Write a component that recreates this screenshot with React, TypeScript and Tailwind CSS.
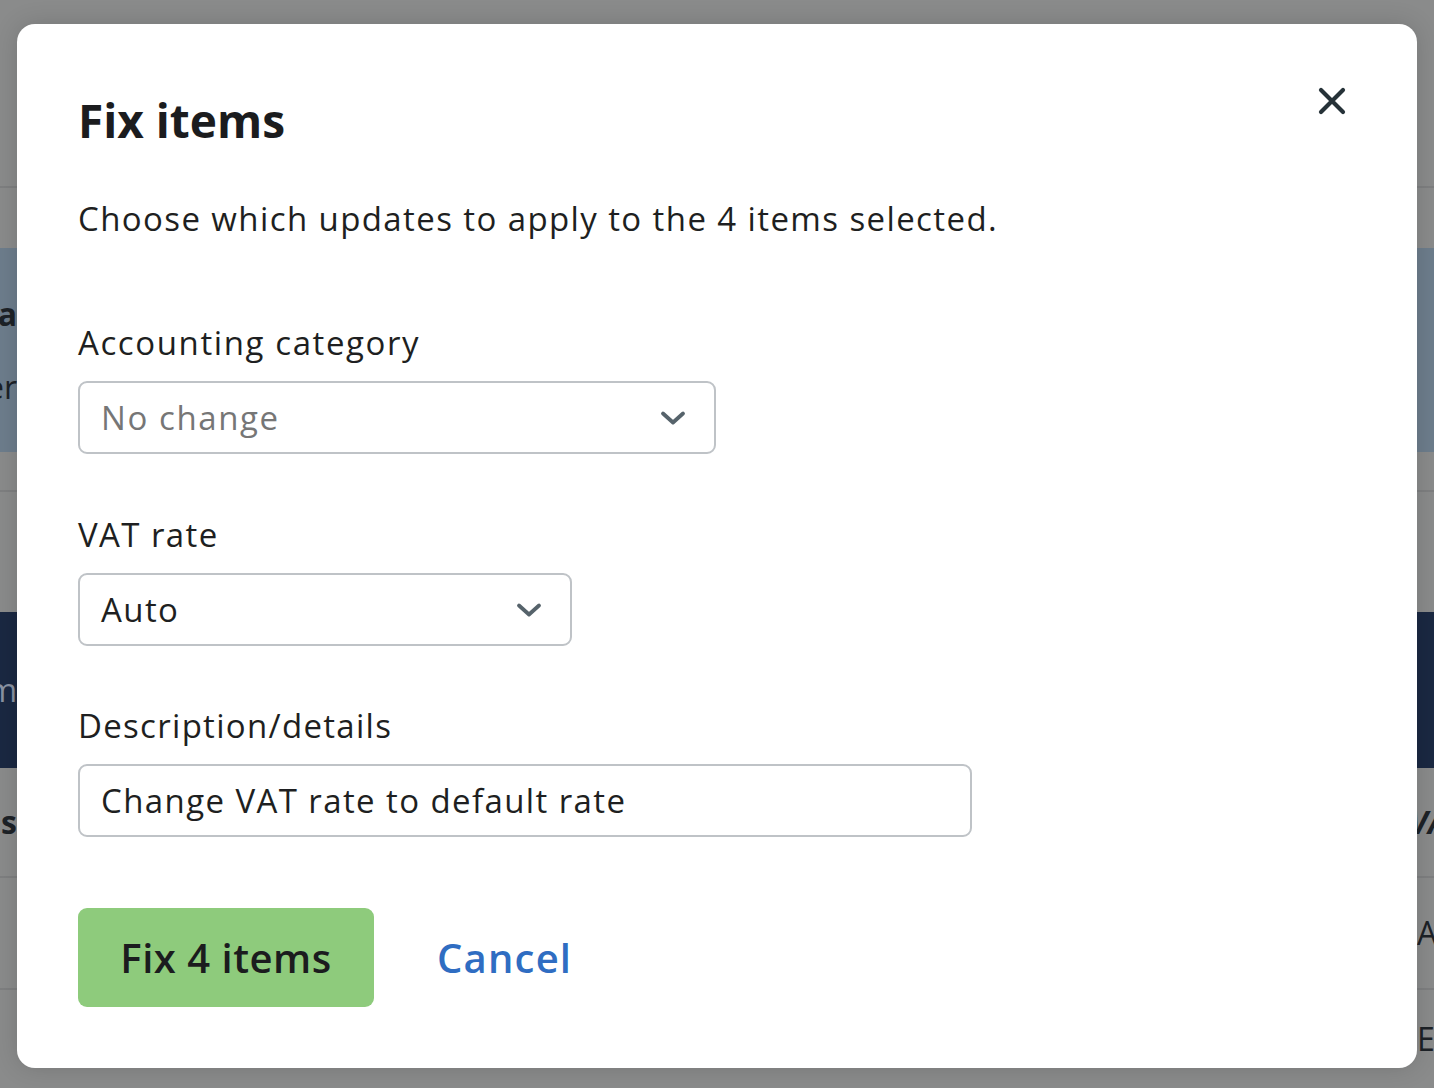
import React from "react";

const font = { fontFamily: "'Open Sans', Lato, sans-serif" };

function Chevron() {
  return (
    <svg width="26" height="16" viewBox="0 0 26 16" fill="none">
      <path d="M3 3.5 L13 12.5 L23 3.5" stroke="#56636b" strokeWidth="3.8" strokeLinecap="round" strokeLinejoin="round" />
    </svg>
  );
}

function CloseIcon() {
  return (
    <svg width="28" height="28" viewBox="0 0 28 28" fill="none">
      <path d="M3 3 L25 25 M25 3 L3 25" stroke="#263238" strokeWidth="4.2" strokeLinecap="round" />
    </svg>
  );
}

function EdgeText({ left, right, leftClass = "", rightClass = "", h = "h-full" }: { left?: string; right?: string; leftClass?: string; rightClass?: string; h?: string }) {
  return (
    <div className={`flex items-center justify-between ${h}`}>
      <div className="flex w-[17px] justify-end overflow-visible whitespace-nowrap">
        <span className={leftClass}>{left}</span>
      </div>
      <div className="flex w-[17px] justify-start overflow-visible whitespace-nowrap">
        <span className={rightClass}>{right}</span>
      </div>
    </div>
  );
}

export default function App() {
  return (
    <div className="relative h-[1088px] w-[1434px] overflow-hidden bg-[#8a8b8b]" style={font}>
      {/* background page (dimmed) */}
      <div className="flex flex-col text-[32px]">
        <div className="h-[188px] border-b-2 border-[#7e7f80]" />
        <div className="h-[60px]" />
        <div className="flex h-[204px] flex-col justify-center gap-[25px] bg-[#6d7d8c] text-[#1d2227]">
          <EdgeText h="h-[48px]" left="ra" leftClass="font-bold" />
          <EdgeText h="h-[48px]" left="er" />
        </div>
        <div className="h-[40px] border-b-2 border-[#7e7f80]" />
        <div className="h-[120px]" />
        <div className="h-[156px] bg-[#1a2842]">
          <EdgeText left="m" leftClass="text-[#8a93a3]" />
        </div>
        <div className="h-[110px] border-b-2 border-[#7e7f80]">
          <EdgeText left="s" right="VA" leftClass="font-bold text-[#1d2227]" rightClass="-ml-[8px] font-bold italic text-[#1d2227]" />
        </div>
        <div className="h-[112px] border-b-2 border-[#7e7f80]">
          <EdgeText right="A" rightClass="text-[#1d2227]" />
        </div>
        <div className="h-[98px]">
          <EdgeText right="E" rightClass="text-[#1d2227]" />
        </div>
      </div>

      {/* modal */}
      <div className="absolute left-[17px] top-[24px] flex h-[1044px] w-[1400px] flex-col rounded-[18px] bg-white px-[61px] pt-[67px] pb-[61px] text-[#1e1f21] shadow-[0_0_24px_rgba(0,0,0,0.15)]">
        <button className="absolute right-[71px] top-[63px]" aria-label="Close">
          <CloseIcon />
        </button>
        <h1 className="text-[46px] font-bold leading-[58px] text-[#1b1c1e]">Fix items</h1>
        <p className="mt-[50px] text-[33px] leading-[40px] tracking-[1.4px]">Choose which updates to apply to the 4 items selected.</p>

        <label className="mt-[84px] text-[33px] leading-[40px] tracking-[1.6px]">Accounting category</label>
        <div className="mt-[18px] flex h-[73px] w-[638px] items-center justify-between rounded-[9px] border-2 border-[#bfc3c7] pl-[21px] pr-[28px]">
          <span className="text-[33px] tracking-[1.6px] text-[#767676]">No change</span>
          <Chevron />
        </div>

        <label className="mt-[61px] text-[33px] leading-[40px] tracking-[1.4px]">VAT rate</label>
        <div className="mt-[18px] flex h-[73px] w-[494px] items-center justify-between rounded-[9px] border-2 border-[#bfc3c7] pl-[21px] pr-[28px]">
          <span className="text-[33px] tracking-[1.4px]">Auto</span>
          <Chevron />
        </div>

        <label className="mt-[60px] text-[33px] leading-[40px] tracking-[1.3px]">Description/details</label>
        <div className="mt-[18px] flex h-[73px] w-[894px] items-center rounded-[9px] border-2 border-[#bfc3c7] pl-[21px]">
          <span className="text-[33px] tracking-[1.4px]">Change VAT rate to default rate</span>
        </div>

        <div className="mt-[71px] flex items-center">
          <button className="flex h-[99px] w-[296px] items-center justify-center rounded-[9px] bg-[#8ecb7c] text-[40px] font-semibold tracking-[0.5px] text-[#1b1c1e]">
            Fix 4 items
          </button>
          <button className="ml-[63px] text-[40px] font-semibold tracking-[1.2px] text-[#2f6dc2]">Cancel</button>
        </div>
      </div>
    </div>
  );
}
